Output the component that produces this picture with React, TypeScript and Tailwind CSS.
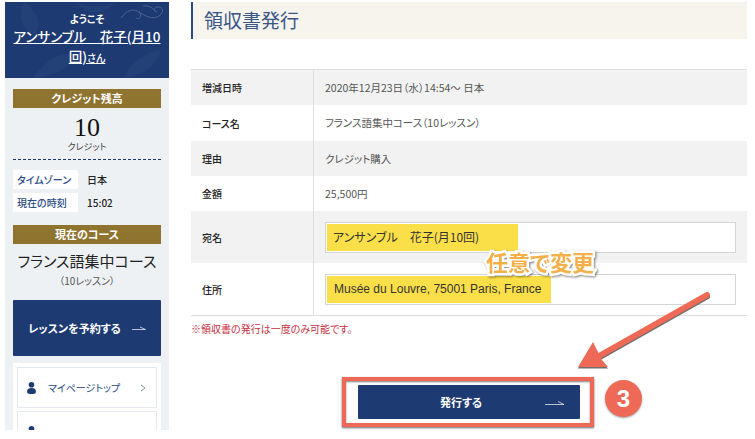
import React from 'react';

const jp = 'font-["Noto_Sans_CJK_JP","Noto_Sans",sans-serif]';

const rows = [
  { label: '増減日時', value: '2020年12月23日（水）14:54〜 日本', h: 'h-[35px]', bg: 'bg-[#f2f2f2]' },
  { label: 'コース名', value: 'フランス語集中コース（10レッスン）', h: 'h-[36px]', bg: 'bg-white' },
  { label: '理由', value: 'クレジット購入', h: 'h-[35px]', bg: 'bg-[#f2f2f2]' },
  { label: '金額', value: '25,500円', h: 'h-[35px]', bg: 'bg-white' },
];

const Arrow = () => (
  <svg width="14" height="8" viewBox="0 0 14 8" fill="none" stroke="currentColor" strokeWidth="0.7">
    <path d="M0 5.5H13.5L8 3" />
  </svg>
);

const PersonIcon = () => (
  <svg width="9" height="12" viewBox="0 0 9 12" fill="#1d3a72" className="shrink-0">
    <circle cx="4.5" cy="2.8" r="2.8" />
    <path d="M0 9.5C0 7 2 6 4.5 6S9 7 9 9.5C9 11.2 7.8 12 6 12H3C1.2 12 0 11.2 0 9.5Z" />
  </svg>
);

const Sidebar = () => (
  <aside className="w-[164px] ml-[5px] shrink-0 h-[428px] bg-[#edf1f4] overflow-hidden">
    <div className="relative h-[76px] bg-[#1d3a72] text-white text-center overflow-hidden pt-[10px]">
      <svg className="absolute left-0 top-0" width="164" height="76" viewBox="0 0 164 76" fill="#234177">
        <path d="M20 0C34 12 38 24 28 34C18 26 10 14 20 0ZM28 76C40 58 54 50 70 52C66 66 50 74 28 76ZM70 0C84 6 98 6 110 0C100 14 82 14 70 0ZM118 76C126 60 140 50 156 48C152 64 138 74 118 76Z" />
      </svg>
      <svg className="absolute right-0 top-0" width="50" height="26" viewBox="0 0 50 26" fill="none" stroke="#5a72a0" strokeWidth="0.7">
        <path d="M2 16C8 8 14 6 20 10C24 14 20 18 17 16M20 10C26 14 34 18 40 14C46 10 44 4 38 5C34 6 35 10 38 10M24 4C30 3 34 6 36 9" />
      </svg>
      <div className="relative text-[10px] leading-[14px] font-bold">ようこそ</div>
      <div className="relative text-[13.5px] leading-[20px] font-medium underline whitespace-nowrap">アンサンブル　花子(月10</div>
      <div className="relative text-[13.5px] leading-[20px] font-medium underline whitespace-nowrap">
        回)<span className="text-[10px]">さん</span>
      </div>
    </div>
    <div className="px-[8px] pt-[11px]">
      <div className="h-[19px] bg-[#8f7430] text-white text-[11px] leading-[19px] font-bold text-center">クレジット残高</div>
      <div className="font-['Liberation_Serif',serif] text-[#111] text-[26px] leading-[26px] text-center mt-[7px]">10</div>
      <div className="text-[9px] leading-[12px] text-[#444] text-center">クレジット</div>
      <div className="border-t border-dashed border-[#1d3a72] mt-[6px]" />
      <div className="flex items-center h-[19px] mt-[10px]">
        <div className="w-[65px] h-full bg-white text-[#2a4a85] text-[10px] leading-[19px] font-medium pl-[4px]">タイムゾーン</div>
        <div className="text-[10px] font-medium text-[#222] ml-[9px]">日本</div>
      </div>
      <div className="flex items-center h-[19px] mt-[4px]">
        <div className="w-[65px] h-full bg-white text-[#2a4a85] text-[10px] leading-[19px] font-medium pl-[4px]">現在の時刻</div>
        <div className="text-[10px] font-medium text-[#222] ml-[9px]">15:02</div>
      </div>
      <div className="h-[19px] bg-[#8f7430] text-white text-[11px] leading-[19px] font-bold text-center mt-[13px]">現在のコース</div>
      <div className="text-[#222] text-[15px] leading-[20px] text-center mt-[7px] whitespace-nowrap">フランス語集中コース</div>
      <div className="text-[#555] text-[10px] leading-[14px] text-center mt-[3px]">（10レッスン）</div>
      <div className="h-[56px] bg-[#1d3a72] rounded-[1px] text-white flex items-center justify-center gap-[11px] mt-[12px]">
        <span className="text-[11px] font-bold">レッスンを予約する</span>
        <Arrow />
      </div>
      <div className="bg-white p-[4px] mt-[7px] h-[80px]">
        <div className="relative h-[41px] border border-[#e3e9ee] flex items-center pl-[9px] pr-[10px] text-[#2a4a85] overflow-hidden">
          <PersonIcon />
          <span className="text-[10px] ml-[12px]">マイページトップ</span>
          <svg className="ml-auto" width="6" height="8" viewBox="0 0 6 8" fill="none" stroke="#8a97a8" strokeWidth="1">
            <path d="M1 1L5 4L1 7" />
          </svg>
        </div>
        <div className="h-[41px] border border-[#e3e9ee] flex items-start pt-[14px] pl-[9px] mt-[3px]">
          <PersonIcon />
        </div>
      </div>
    </div>
  </aside>
);

const ReceiptTable = () => (
  <div className="mt-[30px] border-y border-[#dedede] text-[10px]">
    {rows.map((r) => (
      <div key={r.label} className={`flex items-center ${r.h} ${r.bg}`}>
        <div className="w-[123px] h-full flex items-center pl-[11px] font-medium text-[#222] border-r border-[#dedede]">{r.label}</div>
        <div className="pl-[11px] text-[#555] text-[10.5px]">{r.value}</div>
      </div>
    ))}
    <div className="flex items-center h-[52px] bg-[#f2f2f2]">
      <div className="w-[123px] h-full flex items-center pl-[11px] font-medium text-[#222] border-r border-[#dedede]">宛名</div>
      <div className="flex-1 pl-[11px] pr-[11px]">
        <div className="h-[31px] bg-white border border-[#d5d5d5] flex items-center p-[1px]">
          <div className="w-[191px] h-full bg-[#fbdf48] text-[#333] text-[12px] flex items-center pl-[6px]">アンサンブル　花子(月10回)</div>
        </div>
      </div>
    </div>
    <div className="flex items-center h-[52px] bg-white">
      <div className="w-[123px] h-full flex items-center pl-[11px] font-medium text-[#222] border-r border-[#dedede]">住所</div>
      <div className="flex-1 pl-[11px] pr-[11px]">
        <div className="h-[31px] bg-white border border-[#d5d5d5] flex items-center p-[1px]">
          <div className="w-[224px] h-full bg-[#fbdf48] text-[#333] text-[12px] flex items-center pl-[7px] font-['Liberation_Sans',sans-serif]">Musée du Louvre, 75001 Paris, France</div>
        </div>
      </div>
    </div>
  </div>
);

export default function App() {
  return (
    <div className={`relative w-[755px] h-[439px] bg-white overflow-hidden flex pt-[2px] [font-feature-settings:'palt'] ${jp}`}>
      <Sidebar />
      <main className="ml-[22px] w-[556px]">
        <div className="h-[37px] bg-[#f7f4ee] border-l-2 border-[#2a4a85] pl-[11px] text-[#3a5788] text-[19px] leading-[36px]">領収書発行</div>
        <ReceiptTable />
        <p className="text-[10px] leading-[12px] text-[#c8303f] mt-[7px]">※領収書の発行は一度のみ可能です。</p>
        <div className="ml-[167px] mt-[50px] w-[222px] h-[34px] bg-[#1d3a72] rounded-[1px] text-white flex items-center">
          <span className="ml-[82px] text-[11px] font-bold">発行する</span>
          <span className="ml-auto mr-[15px] w-[20px]"><svg width="20" height="8" viewBox="0 0 20 8" fill="none" stroke="currentColor" strokeWidth="0.7"><path d="M0 6.5H19L13 3.5" /></svg></span>
        </div>
      </main>

      {/* annotations on top of the page */}
      <div className="absolute left-[342px] top-[377px] w-[252px] h-[50px] border-[4px] border-[#ee6a57] shadow-[0_1px_2px_rgba(0,0,0,0.6),inset_0_1px_2px_rgba(0,0,0,0.5)]" />
      <div className="absolute left-[605px] top-[380px] w-[37px] h-[37px] rounded-full bg-[#ee6a57] text-white text-[24px] font-bold leading-[37px] text-center font-['Liberation_Sans',sans-serif] shadow-[0_1px_2px_rgba(0,0,0,0.4)]">3</div>
      <svg className="absolute left-[570px] top-[285px]" width="150" height="90" viewBox="0 0 150 90" fill="none">
        <g transform="translate(0 1.5)">
          <path d="M137 10L29 71" stroke="#6f6f6f" strokeWidth="6" strokeLinecap="round" />
          <path d="M8 82L23 57L28 67L32 75L38 82Z" fill="#6f6f6f" />
        </g>
        <path d="M137 10L29 71" stroke="#ee6a57" strokeWidth="6" strokeLinecap="round" />
        <path d="M8 82L23 57L28 67L32 75L38 82Z" fill="#ee6a57" />
      </svg>
      <div className="absolute left-[486px] top-[247px] text-[22px] leading-[28px] font-bold whitespace-nowrap text-[#f6b04a] [paint-order:stroke_fill] [-webkit-text-stroke:5px_white] [filter:drop-shadow(1px_1px_1px_rgba(0,0,0,0.5))]">任意で変更</div>
    </div>
  );
}
